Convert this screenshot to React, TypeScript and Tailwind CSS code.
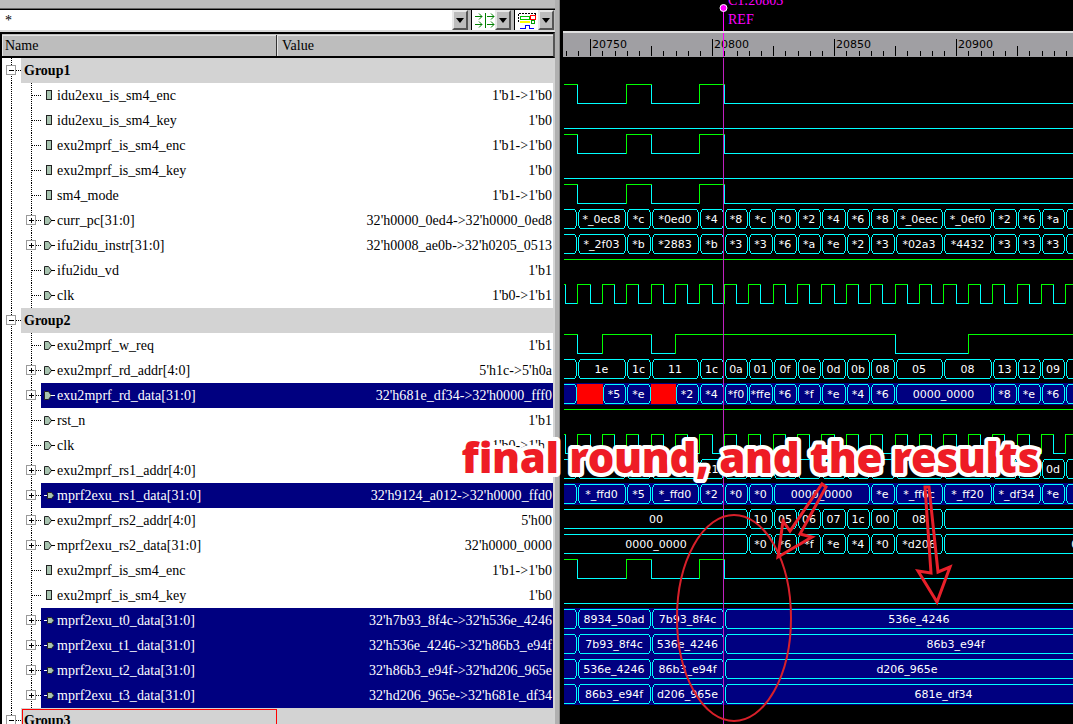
type Seg = { n: number; label?: string; red?: boolean };
type Wave =
    | { kind: 'level'; init: 0 | 1; toggles: number[] }
    | { kind: 'bus'; segs: Seg[]; end: number }
    | { kind: 'none' };
type Row = {
    name: string;
    value?: string;
    icon?: 'rect' | 'out' | 'in';
    bus?: boolean;
    navy?: boolean;
    group?: boolean;
    wave: Wave;
};

const enc: Wave = { kind: 'level', init: 1, toggles: [0, 2, 3, 5, 6] };
const clkToggles: number[] = [];
for (let i = -1; i < 44; i++) clkToggles.push(i / 2);
const clk: Wave = { kind: 'level', init: 1, toggles: clkToggles };
const flatLow: Wave = { kind: 'level', init: 0, toggles: [] };
const flatHigh: Wave = { kind: 'level', init: 1, toggles: [] };

const seq = (start: number, labels: string[]) => labels.map((label, i) => ({ n: start + i, label }));

const rows: Row[] = [
    { name: 'Group1', group: true, wave: { kind: 'none' } },
    { name: 'idu2exu_is_sm4_enc', value: "1'b1->1'b0", icon: 'rect', wave: enc },
    { name: 'idu2exu_is_sm4_key', value: "1'b0", icon: 'rect', wave: flatLow },
    { name: 'exu2mprf_is_sm4_enc', value: "1'b1->1'b0", icon: 'rect', wave: enc },
    { name: 'exu2mprf_is_sm4_key', value: "1'b0", icon: 'rect', wave: flatLow },
    { name: 'sm4_mode', value: "1'b1->1'b0", icon: 'rect', wave: enc },
    {
        name: 'curr_pc[31:0]',
        value: "32'h0000_0ed4->32'h0000_0ed8",
        icon: 'out',
        bus: true,
        wave: {
            kind: 'bus',
            end: 22,
            segs: [
                { n: -1 },
                { n: 0, label: '*_0ec8' },
                { n: 2, label: '*c' },
                { n: 3, label: '*0ed0' },
                ...seq(5, ['*4', '*8', '*c', '*0', '*2', '*4', '*6', '*8']),
                { n: 13, label: '*_0eec' },
                { n: 15, label: '*_0ef0' },
                ...seq(17, ['*2', '*6', '*a', '']),
            ],
        },
    },
    {
        name: 'ifu2idu_instr[31:0]',
        value: "32'h0008_ae0b->32'h0205_0513",
        icon: 'out',
        bus: true,
        wave: {
            kind: 'bus',
            end: 22,
            segs: [
                { n: -1 },
                { n: 0, label: '*_2f03' },
                { n: 2, label: '*b' },
                { n: 3, label: '*2883' },
                ...seq(5, ['*b', '*3', '*3', '*6', '*a', '*e', '*2', '*3']),
                { n: 13, label: '*02a3' },
                { n: 15, label: '*4432' },
                ...seq(17, ['*3', '*3', '*3', '']),
            ],
        },
    },
    { name: 'ifu2idu_vd', value: "1'b1", icon: 'out', wave: flatHigh },
    { name: 'clk', value: "1'b0->1'b1", icon: 'out', wave: clk },
    { name: 'Group2', group: true, wave: { kind: 'none' } },
    { name: 'exu2mprf_w_req', value: "1'b1", icon: 'out', wave: { kind: 'level', init: 1, toggles: [0, 1, 3, 4, 13, 16] } },
    {
        name: 'exu2mprf_rd_addr[4:0]',
        value: "5'h1c->5'h0a",
        icon: 'out',
        bus: true,
        wave: {
            kind: 'bus',
            end: 22,
            segs: [
                { n: -1 },
                { n: 0, label: '1e' },
                { n: 2, label: '1c' },
                { n: 3, label: '11' },
                ...seq(5, ['1c', '0a', '01', '0f', '0e', '0d', '0b', '08']),
                { n: 13, label: '05' },
                { n: 15, label: '08' },
                ...seq(17, ['13', '12', '09', '']),
            ],
        },
    },
    {
        name: 'exu2mprf_rd_data[31:0]',
        value: "32'h681e_df34->32'h0000_fff0",
        icon: 'out',
        bus: true,
        navy: true,
        wave: {
            kind: 'bus',
            end: 22,
            segs: [
                { n: -1 },
                { n: 0, red: true },
                { n: 1, label: '*5' },
                { n: 2, label: '*e' },
                { n: 3, red: true },
                ...seq(4, ['*2', '*4', '*f0', '*ffe', '*6', '*f', '*e', '*4', '*6']),
                { n: 13, label: '0000_0000' },
                ...seq(17, ['*8', '*e', '*6', '']),
            ],
        },
    },
    { name: 'rst_n', value: "1'b1", icon: 'out', wave: flatHigh },
    { name: 'clk', value: "1'b0->1'b1", icon: 'out', wave: clk },
    {
        name: 'exu2mprf_rs1_addr[4:0]',
        value: "5'h11->5'h0a",
        icon: 'out',
        bus: true,
        wave: {
            kind: 'bus',
            end: 22,
            segs: [{ n: -1 }, { n: 0 }, { n: 2 }, { n: 3 }, { n: 5, label: '11' }, ...seq(6, ['', '', '', '', '', '', '']), { n: 13 }, { n: 15 }, { n: 17 }, { n: 18 }, { n: 19, label: '0d' }, { n: 20 }],
        },
    },
    {
        name: 'mprf2exu_rs1_data[31:0]',
        value: "32'h9124_a012->32'h0000_ffd0",
        icon: 'in',
        bus: true,
        navy: true,
        wave: {
            kind: 'bus',
            end: 22,
            segs: [
                { n: -1 },
                { n: 0, label: '*_ffd0' },
                { n: 2, label: '*5' },
                { n: 3, label: '*_ffd0' },
                ...seq(5, ['*2', '*0', '*0']),
                { n: 8, label: '0000_0000' },
                { n: 12, label: '*e' },
                { n: 13, label: '*_ff6c' },
                { n: 15, label: '*_ff20' },
                { n: 17, label: '*_df34' },
                { n: 19, label: '*e' },
                { n: 20 },
            ],
        },
    },
    {
        name: 'exu2mprf_rs2_addr[4:0]',
        value: "5'h00",
        icon: 'out',
        bus: true,
        wave: {
            kind: 'bus',
            end: 28,
            segs: [{ n: -1, label: '00' }, ...seq(7, ['10', '05', '06', '07', '1c', '00']), { n: 13, label: '08' }, { n: 15 }],
        },
    },
    {
        name: 'mprf2exu_rs2_data[31:0]',
        value: "32'h0000_0000",
        icon: 'out',
        bus: true,
        wave: {
            kind: 'bus',
            end: 28,
            segs: [{ n: -1, label: '0000_0000' }, ...seq(7, ['*0', '*6', '*f', '*e', '*4', '*0']), { n: 13, label: '*d206' }, { n: 15, label: '0000_0000' }],
        },
    },
    { name: 'exu2mprf_is_sm4_enc', value: "1'b1->1'b0", icon: 'rect', wave: enc },
    { name: 'exu2mprf_is_sm4_key', value: "1'b0", icon: 'rect', wave: flatLow },
    {
        name: 'mprf2exu_t0_data[31:0]',
        value: "32'h7b93_8f4c->32'h536e_4246",
        icon: 'in',
        bus: true,
        navy: true,
        wave: { kind: 'bus', end: 22, segs: [{ n: -1 }, { n: 0, label: '8934_50ad' }, { n: 3, label: '7b93_8f4c' }, { n: 6, label: '536e_4246' }] },
    },
    {
        name: 'mprf2exu_t1_data[31:0]',
        value: "32'h536e_4246->32'h86b3_e94f",
        icon: 'in',
        bus: true,
        navy: true,
        wave: { kind: 'bus', end: 25, segs: [{ n: -1 }, { n: 0, label: '7b93_8f4c' }, { n: 3, label: '536e_4246' }, { n: 6, label: '86b3_e94f' }] },
    },
    {
        name: 'mprf2exu_t2_data[31:0]',
        value: "32'h86b3_e94f->32'hd206_965e",
        icon: 'in',
        bus: true,
        navy: true,
        wave: { kind: 'bus', end: 21, segs: [{ n: -1 }, { n: 0, label: '536e_4246' }, { n: 3, label: '86b3_e94f' }, { n: 6, label: 'd206_965e' }] },
    },
    {
        name: 'mprf2exu_t3_data[31:0]',
        value: "32'hd206_965e->32'h681e_df34",
        icon: 'in',
        bus: true,
        navy: true,
        wave: { kind: 'bus', end: 24, segs: [{ n: -1 }, { n: 0, label: '86b3_e94f' }, { n: 3, label: 'd206_965e' }, { n: 6, label: '681e_df34' }] },
    },
    { name: 'Group3', group: true, wave: { kind: 'none' } },
];

const ROW_H = 25;
const FIRST_ROW = 58;
const cyc = (n: number) => (n < 0 ? 564 : Math.round(577.3 + 24.4 * n));

function Expander({ x, y, plus }: { x: number; y: number; plus?: boolean }) {
    return (
        <g shapeRendering="crispEdges">
            <rect x={x - 4.5} y={y - 4.5} width={9} height={9} fill="#fff" stroke="#9a9a9a" />
            <line x1={x - 2} x2={x + 3} y1={y + 0.5} y2={y + 0.5} stroke="#000" />
            {plus && <line x1={x + 0.5} x2={x + 0.5} y1={y - 2} y2={y + 3} stroke="#000" />}
        </g>
    );
}

function TreeRow({ row }: { row: Row }) {
    if (row.group) {
        return (
            <div className="flex h-[25px]">
                <svg width={19} height={25} viewBox="2 0 19 25" className="shrink-0">
                    <line x1={11.5} x2={11.5} y1={0} y2={25} stroke="#000" strokeDasharray="1 1" shapeRendering="crispEdges" />
                    <Expander x={11} y={12} />
                    <line x1={16} x2={21} y1={12.5} y2={12.5} stroke="#000" strokeDasharray="1 1" shapeRendering="crispEdges" />
                </svg>
                <div className="flex flex-1 items-center bg-[#d3d3d3] pl-[3px] font-['Liberation_Serif'] text-[14px] font-bold text-black">{row.name}</div>
            </div>
        );
    }
    const color = row.navy ? 'bg-[#000080] text-white' : 'bg-white text-black';
    return (
        <div className="flex h-[25px]">
            <svg width={39} height={25} viewBox="2 0 39 25" className="shrink-0">
                <g stroke="#000" strokeDasharray="1 1" shapeRendering="crispEdges">
                    <line x1={11.5} x2={11.5} y1={0} y2={25} />
                    <line x1={31.5} x2={31.5} y1={0} y2={25} />
                    <line x1={32} x2={41} y1={12.5} y2={12.5} />
                </g>
                {row.bus && <Expander x={31} y={12} plus />}
            </svg>
            <div className={`flex flex-1 items-center pr-[1px] font-['Liberation_Serif'] text-[14px] tracking-[0.05px] ${color}`}>
                <svg width={16} height={25} viewBox="41 0 16 25" className="shrink-0">
                    {row.icon === 'rect' && <rect x={46.5} y={7.5} width={5} height={9} fill="#a8c4b0" stroke="#222" shapeRendering="crispEdges" />}
                    {row.icon === 'out' && (
                        <g>
                            <path d="M44.5 8.5h4l3 4-3 4h-4z" fill="#a8c4b0" stroke="#222" />
                            <line x1={51} x2={55} y1={12.5} y2={12.5} stroke={row.navy ? '#fff' : '#000'} />
                        </g>
                    )}
                    {row.icon === 'in' && (
                        <g>
                            <line x1={44} x2={48} y1={12.5} y2={12.5} stroke="#fff" />
                            <path d="M47.5 9.5h4l2.5 3-2.5 3h-4z" fill="#a8c4b0" stroke="#222" />
                        </g>
                    )}
                </svg>
                <span className="whitespace-nowrap">{row.name}</span>
                <span className="ml-auto whitespace-nowrap">{row.value}</span>
            </div>
        </div>
    );
}

function LevelWave({ wave, top }: { wave: Extract<Wave, { kind: 'level' }>; top: number }) {
    const hi = top + 1.5;
    const lo = top + 20.5;
    const parts = [];
    let level = wave.init;
    let x = 564;
    wave.toggles.forEach((n, i) => {
        const tx = Math.round(577.3 + 24.4 * n);
        if (tx > 1073) return;
        parts.push(<line key={`h${i}`} x1={x} x2={tx + 1} y1={level ? hi : lo} y2={level ? hi : lo} stroke={level ? '#00ff00' : '#00ffff'} />);
        level = level ? 0 : 1;
        parts.push(<line key={`v${i}`} x1={tx + 0.5} x2={tx + 0.5} y1={hi} y2={lo} stroke={level ? '#00ff00' : '#00ffff'} />);
        x = tx;
    });
    parts.push(<line key="end" x1={x} x2={1073} y1={level ? hi : lo} y2={level ? hi : lo} stroke={level ? '#00ff00' : '#00ffff'} />);
    return <g shapeRendering="crispEdges">{parts}</g>;
}

function BusWave({ wave, top }: { wave: Extract<Wave, { kind: 'bus' }>; top: number }) {
    const t = top + 1.5;
    const b = top + 20.5;
    return (
        <g>
            {wave.segs.map((seg, i) => {
                const next = i + 1 < wave.segs.length ? wave.segs[i + 1].n : wave.end;
                const x0 = cyc(seg.n);
                const x1 = cyc(next);
                const a = x0 + 1.5;
                const z = x1 - 0.5;
                const left = seg.n < 0 ? `M${x0} ${t}` : `M${a} ${t + 3}L${a + 2} ${t}`;
                const leftClose = seg.n < 0 ? `L${x0} ${b}` : `L${a + 2} ${b}L${a} ${b - 3}Z`;
                const d = `${left}L${z - 2} ${t}L${z} ${t + 3}L${z} ${b - 3}L${z - 2} ${b}${leftClose}`;
                return (
                    <g key={i}>
                        <path d={d} fill="none" stroke="#00ffff" shapeRendering="crispEdges" />
                        {seg.red && <rect x={x0} y={top + 1} width={x1 - x0 + 1} height={20} fill="#ff0000" />}
                        {seg.label && (
                            <text x={(x0 + x1) / 2} y={top + 15} textAnchor="middle" fill="#fff" className="font-['DejaVu_Sans'] text-[11px]">
                                {seg.label}
                            </text>
                        )}
                    </g>
                );
            })}
        </g>
    );
}

function Waves() {
    return (
        <svg width={510} height={666} viewBox="563 58 510 666" className="block">
            {rows.map((row, i) => {
                const top = FIRST_ROW + i * ROW_H;
                const nextNavy = rows[i + 1]?.navy;
                return row.navy ? <rect key={i} x={564} y={top} width={509} height={nextNavy ? ROW_H : 22} fill="#000080" /> : null;
            })}
            {rows.map((row, i) => {
                const top = FIRST_ROW + i * ROW_H;
                if (row.wave.kind === 'level') return <LevelWave key={i} wave={row.wave} top={top} />;
                if (row.wave.kind === 'bus') return <BusWave key={i} wave={row.wave} top={top} />;
                return null;
            })}
            <line x1={723.5} x2={723.5} y1={58} y2={724} stroke="#c020c0" shapeRendering="crispEdges" />
        </svg>
    );
}

function Ruler() {
    const ticks = [];
    for (let k = 0; k < 42; k++) {
        const x = Math.round(565.7 + 12.2 * k) + 0.5;
        const major = k % 10 === 2;
        const mid = k % 10 === 7;
        ticks.push(<line key={k} x1={x} x2={x} y1={major ? 39 : mid ? 46 : 51} y2={56} stroke="#000" shapeRendering="crispEdges" />);
    }
    return (
        <svg width={510} height={24} viewBox="563 33 510 24" className="block bg-[#a09fa3]">
            {ticks}
            {[
                [592, '20750'],
                [714, '20800'],
                [836, '20850'],
                [958, '20900'],
            ].map(([x, t]) => (
                <text key={t} x={x} y={48} fill="#000" className="font-['DejaVu_Sans'] text-[11px]">
                    {t}
                </text>
            ))}
            <line x1={723.5} x2={723.5} y1={33} y2={57} stroke="#ff00ff" shapeRendering="crispEdges" />
        </svg>
    );
}

function DropArrow() {
    return (
        <div className="flex w-[16px] items-center justify-center border-[2px] border-t-[#e8e8e8] border-l-[#e8e8e8] border-r-[#555] border-b-[#555] bg-[#bdbdbd]">
            <div className="h-0 w-0 border-x-[4px] border-t-[5px] border-x-transparent border-t-black" />
        </div>
    );
}

export default function App() {
    return (
        <div className="relative flex h-[724px] w-[1073px] overflow-hidden bg-[#bdbdbd]">
            <div className="flex w-[555px] shrink-0 flex-col">
                <div className="h-[9px] border-b border-[#666]" />
                <div className="flex h-[23px] gap-[3px] border-t border-b-2 border-t-black border-b-[#d8d8d8] pr-[1px]">
                    <div className="flex flex-1">
                        <div className="flex-1 bg-white pl-[5px] font-['Liberation_Serif'] text-[14px] leading-[22px] text-black">*</div>
                        <DropArrow />
                    </div>
                    <div className="flex w-[40px] border-l border-black bg-white">
                        <div className="flex-1">
                            <svg width={23} height={20} viewBox="0 0 23 20">
                                <g stroke="#008000" fill="none">
                                    <path d="M3 6.5h7M7 3.5l3 3-3 3M3 14.5h7M7 11.5l3 3-3 3M13.5 3v15M15 6.5h7M19 3.5l3 3-3 3M15 14.5h7M19 11.5l3 3-3 3" />
                                </g>
                            </svg>
                        </div>
                        <DropArrow />
                    </div>
                    <div className="flex w-[40px] border-l border-black bg-white">
                        <div className="flex-1">
                            <svg width={23} height={20} viewBox="0 0 23 20" shapeRendering="crispEdges">
                                <path d="M3.5 3.5h17M3.5 3.5v9M20.5 3.5v4" stroke="#000" strokeDasharray="2 1" fill="none" />
                                <rect x={5} y={6} width={9} height={3} fill="none" stroke="#00c000" />
                                <rect x={15.5} y={5.5} width={5} height={4} fill="none" stroke="#ff0000" />
                                <rect x={5} y={11} width={10} height={2} fill="#ffff00" />
                                <rect x={16.5} y={10.5} width={3} height={3} fill="none" stroke="#00a000" />
                                <path d="M5 18.5h5v-3h4v3h5" stroke="#0000ff" fill="none" />
                            </svg>
                        </div>
                        <DropArrow />
                    </div>
                </div>
                <div className="flex h-[26px] border-y-2 border-t-black border-b-black border-l-2 border-r-2 border-l-black border-r-[#555] pt-[1px] font-['Liberation_Serif'] text-[14px] text-black">
                    <div className="flex w-[275px] items-center border-r border-[#333] pl-[3px] shadow-[inset_1px_1px_0_#e4e4e4]">Name</div>
                    <div className="flex flex-1 items-center pl-[5px] shadow-[inset_1px_1px_0_#e4e4e4]">Value</div>
                </div>
                <div className="flex-1 overflow-hidden border-l-2 border-r-2 border-l-black border-r-[#d4d4d4] bg-white">
                    {rows.map((row, i) => (
                        <TreeRow key={i} row={row} />
                    ))}
                </div>
            </div>
            <div className="flex w-[8px] shrink-0">
                <div className="w-[5px] border-r border-[#888] bg-[#b0b0b0]" />
                <div className="flex-1 bg-black" />
            </div>
            <div className="flex flex-1 flex-col bg-black">
                <svg width={510} height={31} viewBox="563 0 510 31" className="block">
                    <line x1={723.5} x2={723.5} y1={8} y2={31} stroke="#ff00ff" shapeRendering="crispEdges" />
                    <circle cx={723.5} cy={8} r={3.5} fill="#ff00ff" stroke="#fff" />
                    <text x={728} y={5} fill="#ff00ff" className="font-['Liberation_Serif'] text-[14px]">
                        C1:20803
                    </text>
                    <text x={728} y={24} fill="#ff00ff" className="font-['Liberation_Serif'] text-[14px]">
                        REF
                    </text>
                </svg>
                <div className="h-[2px] bg-[#e0e0e0]" />
                <Ruler />
                <div className="h-[1px] bg-black" />
                <Waves />
            </div>
            {/* hand-drawn annotations lying over the screenshot */}
            <svg width={1073} height={724} viewBox="0 0 1073 724" className="pointer-events-none absolute top-0 left-0">
                <rect x={22.5} y={709.5} width={254} height={30} fill="none" stroke="#ff0000" />
                <ellipse cx={734} cy={618} rx={57} ry={103} fill="none" stroke="#d8202a" strokeWidth={2} />
                <path d="M778 557L783 521L790 531L822 484L826 487L800 534L812 537Z" fill="none" stroke="#e8202a" strokeWidth={3} />
                <path d="M925 487L931 573L918 571L937 602L950 567L938 572L929 487Z" fill="none" stroke="#e8202a" strokeWidth={3} />
                <text
                    x={461}
                    y={473}
                    textLength={578}
                    lengthAdjust="spacing"
                    fill="#ee1c25"
                    stroke="#fff"
                    strokeWidth={8}
                    strokeLinejoin="round"
                    paintOrder="stroke"
                    className="font-['Noto_Sans'] text-[42px] font-black">
                    final round, and the results
                </text>
            </svg>
        </div>
    );
}
